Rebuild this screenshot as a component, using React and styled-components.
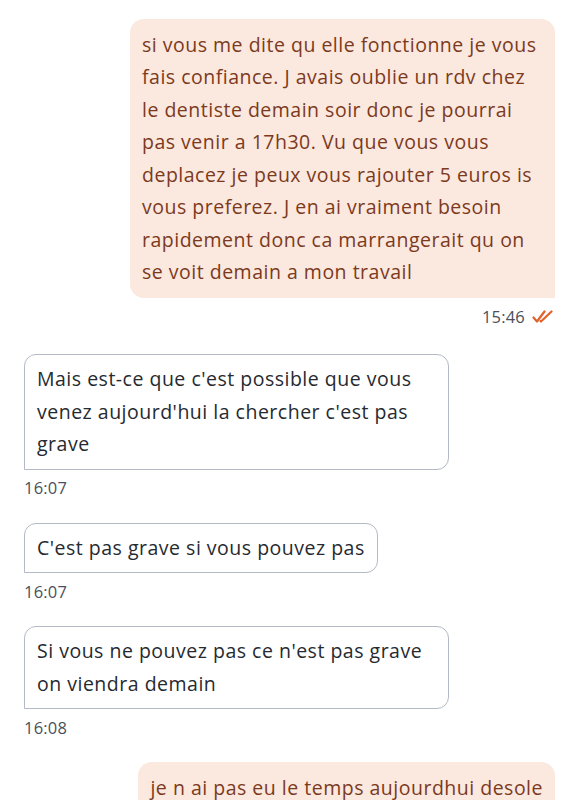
import React from 'react';
import styled, { createGlobalStyle } from 'styled-components';

const GlobalStyle = createGlobalStyle`
  html, body {
    margin: 0;
    padding: 0;
    background: #ffffff;
  }
  body {
    font-family: "Open Sans", "Noto Sans", sans-serif;
  }
`;

const Thread = styled.div`
  display: flex;
  flex-direction: column;
  padding: 19px 25px 0 24px;
  height: 800px;
  overflow: hidden;
  box-sizing: border-box;
`;

const Group = styled.div`
  display: flex;
  flex-direction: column;
  align-items: ${p => (p.$mine ? 'flex-end' : 'flex-start')};
  margin-bottom: ${p => (p.$mine ? '27px' : '24px')};
`;

const Bubble = styled.div`
  box-sizing: border-box;
  max-width: 425px;
  padding: ${p => (p.$mine ? '9.5px 12px' : '8px 12px')};
  font-size: 19.5px;
  line-height: 32.5px;
  letter-spacing: 0.5px;
  color: ${p => (p.$mine ? '#7b3a1d' : '#262a30')};
  background: ${p => (p.$mine ? '#fbe8de' : '#ffffff')};
  border: ${p => (p.$mine ? 'none' : '1.5px solid #b3bac5')};
  border-radius: ${p => (p.$mine ? '14px 14px 0 14px' : '12px 12px 12px 0')};
`;

const Meta = styled.div`
  display: flex;
  align-items: center;
  gap: 7px;
  margin-top: 7px;
  height: 22px;
  font-size: 16.5px;
  letter-spacing: 0.2px;
  color: #4a505c;
  padding-right: ${p => (p.$mine ? '2px' : '0')};
`;

const Ticks = () => (
  <svg width="21" height="13" viewBox="0 0 21 13" fill="none">
    <path d="M1.5 7.5 L5 11.5 L12.5 1.5" stroke="#e2622b" strokeWidth="2.2" strokeLinecap="round" strokeLinejoin="round" />
    <path d="M8.5 11 L9 11.5 L19.5 1.5" stroke="#e2622b" strokeWidth="2.2" strokeLinecap="round" strokeLinejoin="round" />
  </svg>
);

const messages = [
  {
    mine: true,
    text: "si vous me dite qu elle fonctionne je vous fais confiance. J avais oublie un rdv chez le dentiste demain soir donc je pourrai pas venir a 17h30. Vu que vous vous deplacez je peux vous rajouter 5 euros is vous preferez. J en ai vraiment besoin rapidement donc ca marrangerait qu on se voit demain a mon travail",
    time: '15:46',
  },
  {
    mine: false,
    text: "Mais est-ce que c'est possible que vous venez aujourd'hui la chercher c'est pas grave",
    time: '16:07',
  },
  {
    mine: false,
    text: "C'est pas grave si vous pouvez pas",
    time: '16:07',
  },
  {
    mine: false,
    text: "Si vous ne pouvez pas ce n'est pas grave on viendra demain",
    time: '16:08',
  },
  {
    mine: true,
    text: 'je n ai pas eu le temps aujourdhui desole',
    time: '',
  },
];

export default function App() {
  return (
    <>
      <GlobalStyle />
      <Thread>
        {messages.map((m, i) => (
          <Group key={i} $mine={m.mine}>
            <Bubble $mine={m.mine}>{m.text}</Bubble>
            {m.time && (
              <Meta $mine={m.mine}>
                {m.time}
                {m.mine && <Ticks />}
              </Meta>
            )}
          </Group>
        ))}
      </Thread>
    </>
  );
}
